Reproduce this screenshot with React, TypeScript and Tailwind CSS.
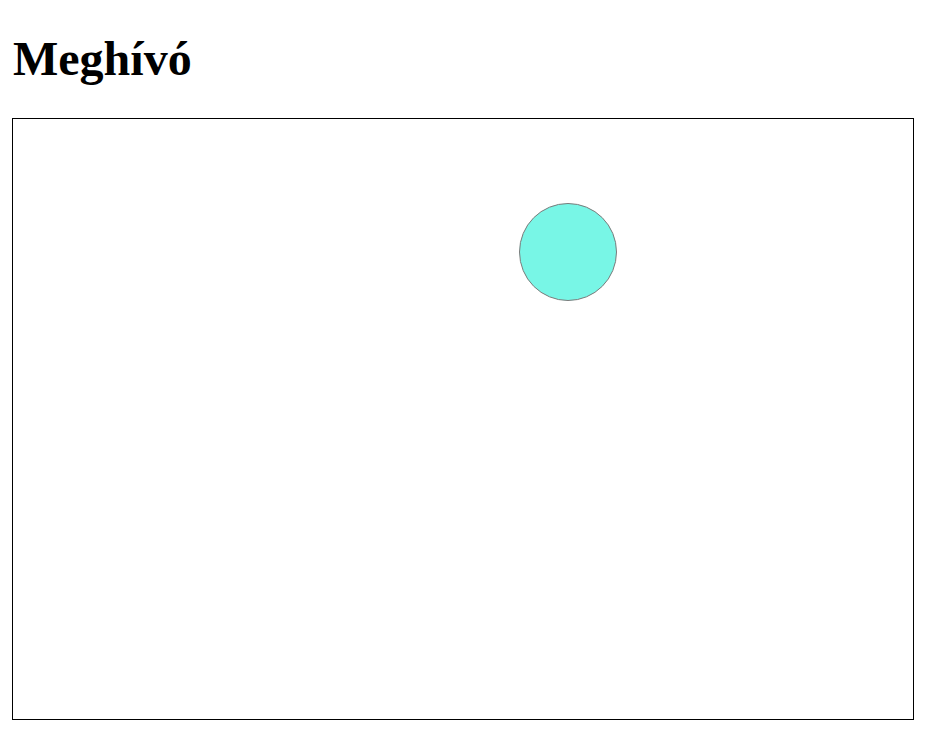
export default function App() {
  return (
    <div className="min-h-screen bg-white px-3 pt-[31px] font-['Liberation_Serif',serif] text-black">
      <h1 className="mb-[32px] pl-px text-[48px] font-bold leading-[55px]">Meghívó</h1>
      <div className="h-[602px] w-[902px] border border-black">
        <svg width="900" height="600" viewBox="0 0 900 600" className="block">
          <circle cx="555" cy="133" r="48.5" fill="#78f6e6" stroke="#7a7a7a" strokeWidth="1" />
        </svg>
      </div>
    </div>
  );
}
